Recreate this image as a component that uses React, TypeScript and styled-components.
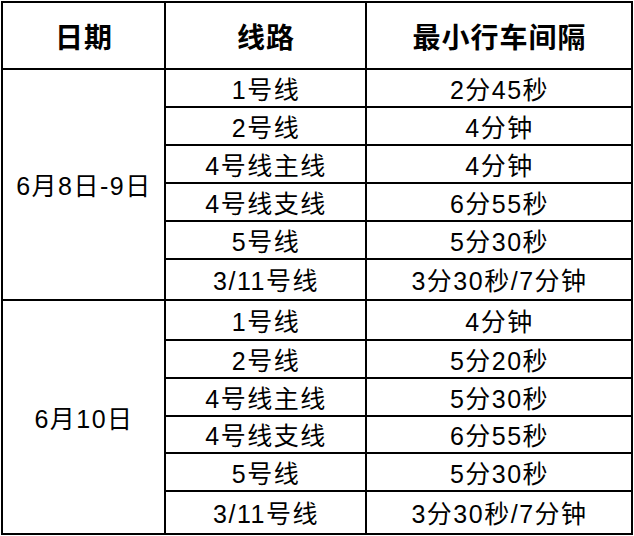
import React from "react";
import styled, { createGlobalStyle } from "styled-components";

const Global = createGlobalStyle`
  html, body { margin: 0; padding: 0; background: #ffffff; }
  body { font-family: "Liberation Sans", "Noto Sans CJK SC", sans-serif; color: #000; }
`;

const Page = styled.div`
  padding: 1px 0 0 1px;
`;

const Table = styled.table`
  border-collapse: separate;
  border-spacing: 0;
  border-left: 2px solid #000;
  border-top: 2px solid #000;
  table-layout: fixed;
  width: 632px;
`;

const Col = styled.col<{ $w: number }>`
  width: ${(p) => p.$w}px;
`;

const Head = styled.th`
  box-sizing: border-box;
  height: 67px;
  padding: 1px 0 0 1px;
  border-right: 2px solid #000;
  border-bottom: 2px solid #000;
  font-family: "Noto Sans CJK SC", sans-serif;
  font-size: 28px;
  font-weight: 700;
  letter-spacing: 1px;
  line-height: 1;
  text-align: center;
  vertical-align: middle;
`;

const Cell = styled.td<{ $h?: number }>`
  box-sizing: border-box;
  height: ${(p) => (p.$h ? `${p.$h}px` : "auto")};
  padding: 4px 0 0 1px;
  border-right: 2px solid #000;
  border-bottom: 2px solid #000;
  font-family: "Liberation Sans", "Noto Sans CJK SC", sans-serif;
  font-size: 25px;
  font-weight: 400;
  letter-spacing: 1.5px;
  line-height: 1;
  text-align: center;
  vertical-align: middle;
  white-space: nowrap;
`;

type Row = { line: string; gap: string };

const groups: { date: string; heights: number[]; rows: Row[] }[] = [
  {
    date: "6月8日-9日",
    heights: [38, 38, 38, 38, 38, 41],
    rows: [
      { line: "1号线", gap: "2分45秒" },
      { line: "2号线", gap: "4分钟" },
      { line: "4号线主线", gap: "4分钟" },
      { line: "4号线支线", gap: "6分55秒" },
      { line: "5号线", gap: "5分30秒" },
      { line: "3/11号线", gap: "3分30秒/7分钟" },
    ],
  },
  {
    date: "6月10日",
    heights: [40, 38, 38, 37, 38, 43],
    rows: [
      { line: "1号线", gap: "4分钟" },
      { line: "2号线", gap: "5分20秒" },
      { line: "4号线主线", gap: "5分30秒" },
      { line: "4号线支线", gap: "6分55秒" },
      { line: "5号线", gap: "5分30秒" },
      { line: "3/11号线", gap: "3分30秒/7分钟" },
    ],
  },
];

export default function App() {
  return (
    <Page>
      <Global />
      <Table>
        <colgroup>
          <Col $w={163} />
          <Col $w={201} />
          <Col $w={266} />
        </colgroup>
        <thead>
          <tr>
            <Head>日期</Head>
            <Head>线路</Head>
            <Head>最小行车间隔</Head>
          </tr>
        </thead>
        <tbody>
          {groups.map((g) =>
            g.rows.map((r, i) => (
              <tr key={g.date + i}>
                {i === 0 && <Cell rowSpan={g.rows.length}>{g.date}</Cell>}
                <Cell $h={g.heights[i]}>{r.line}</Cell>
                <Cell $h={g.heights[i]}>{r.gap}</Cell>
              </tr>
            ))
          )}
        </tbody>
      </Table>
    </Page>
  );
}
